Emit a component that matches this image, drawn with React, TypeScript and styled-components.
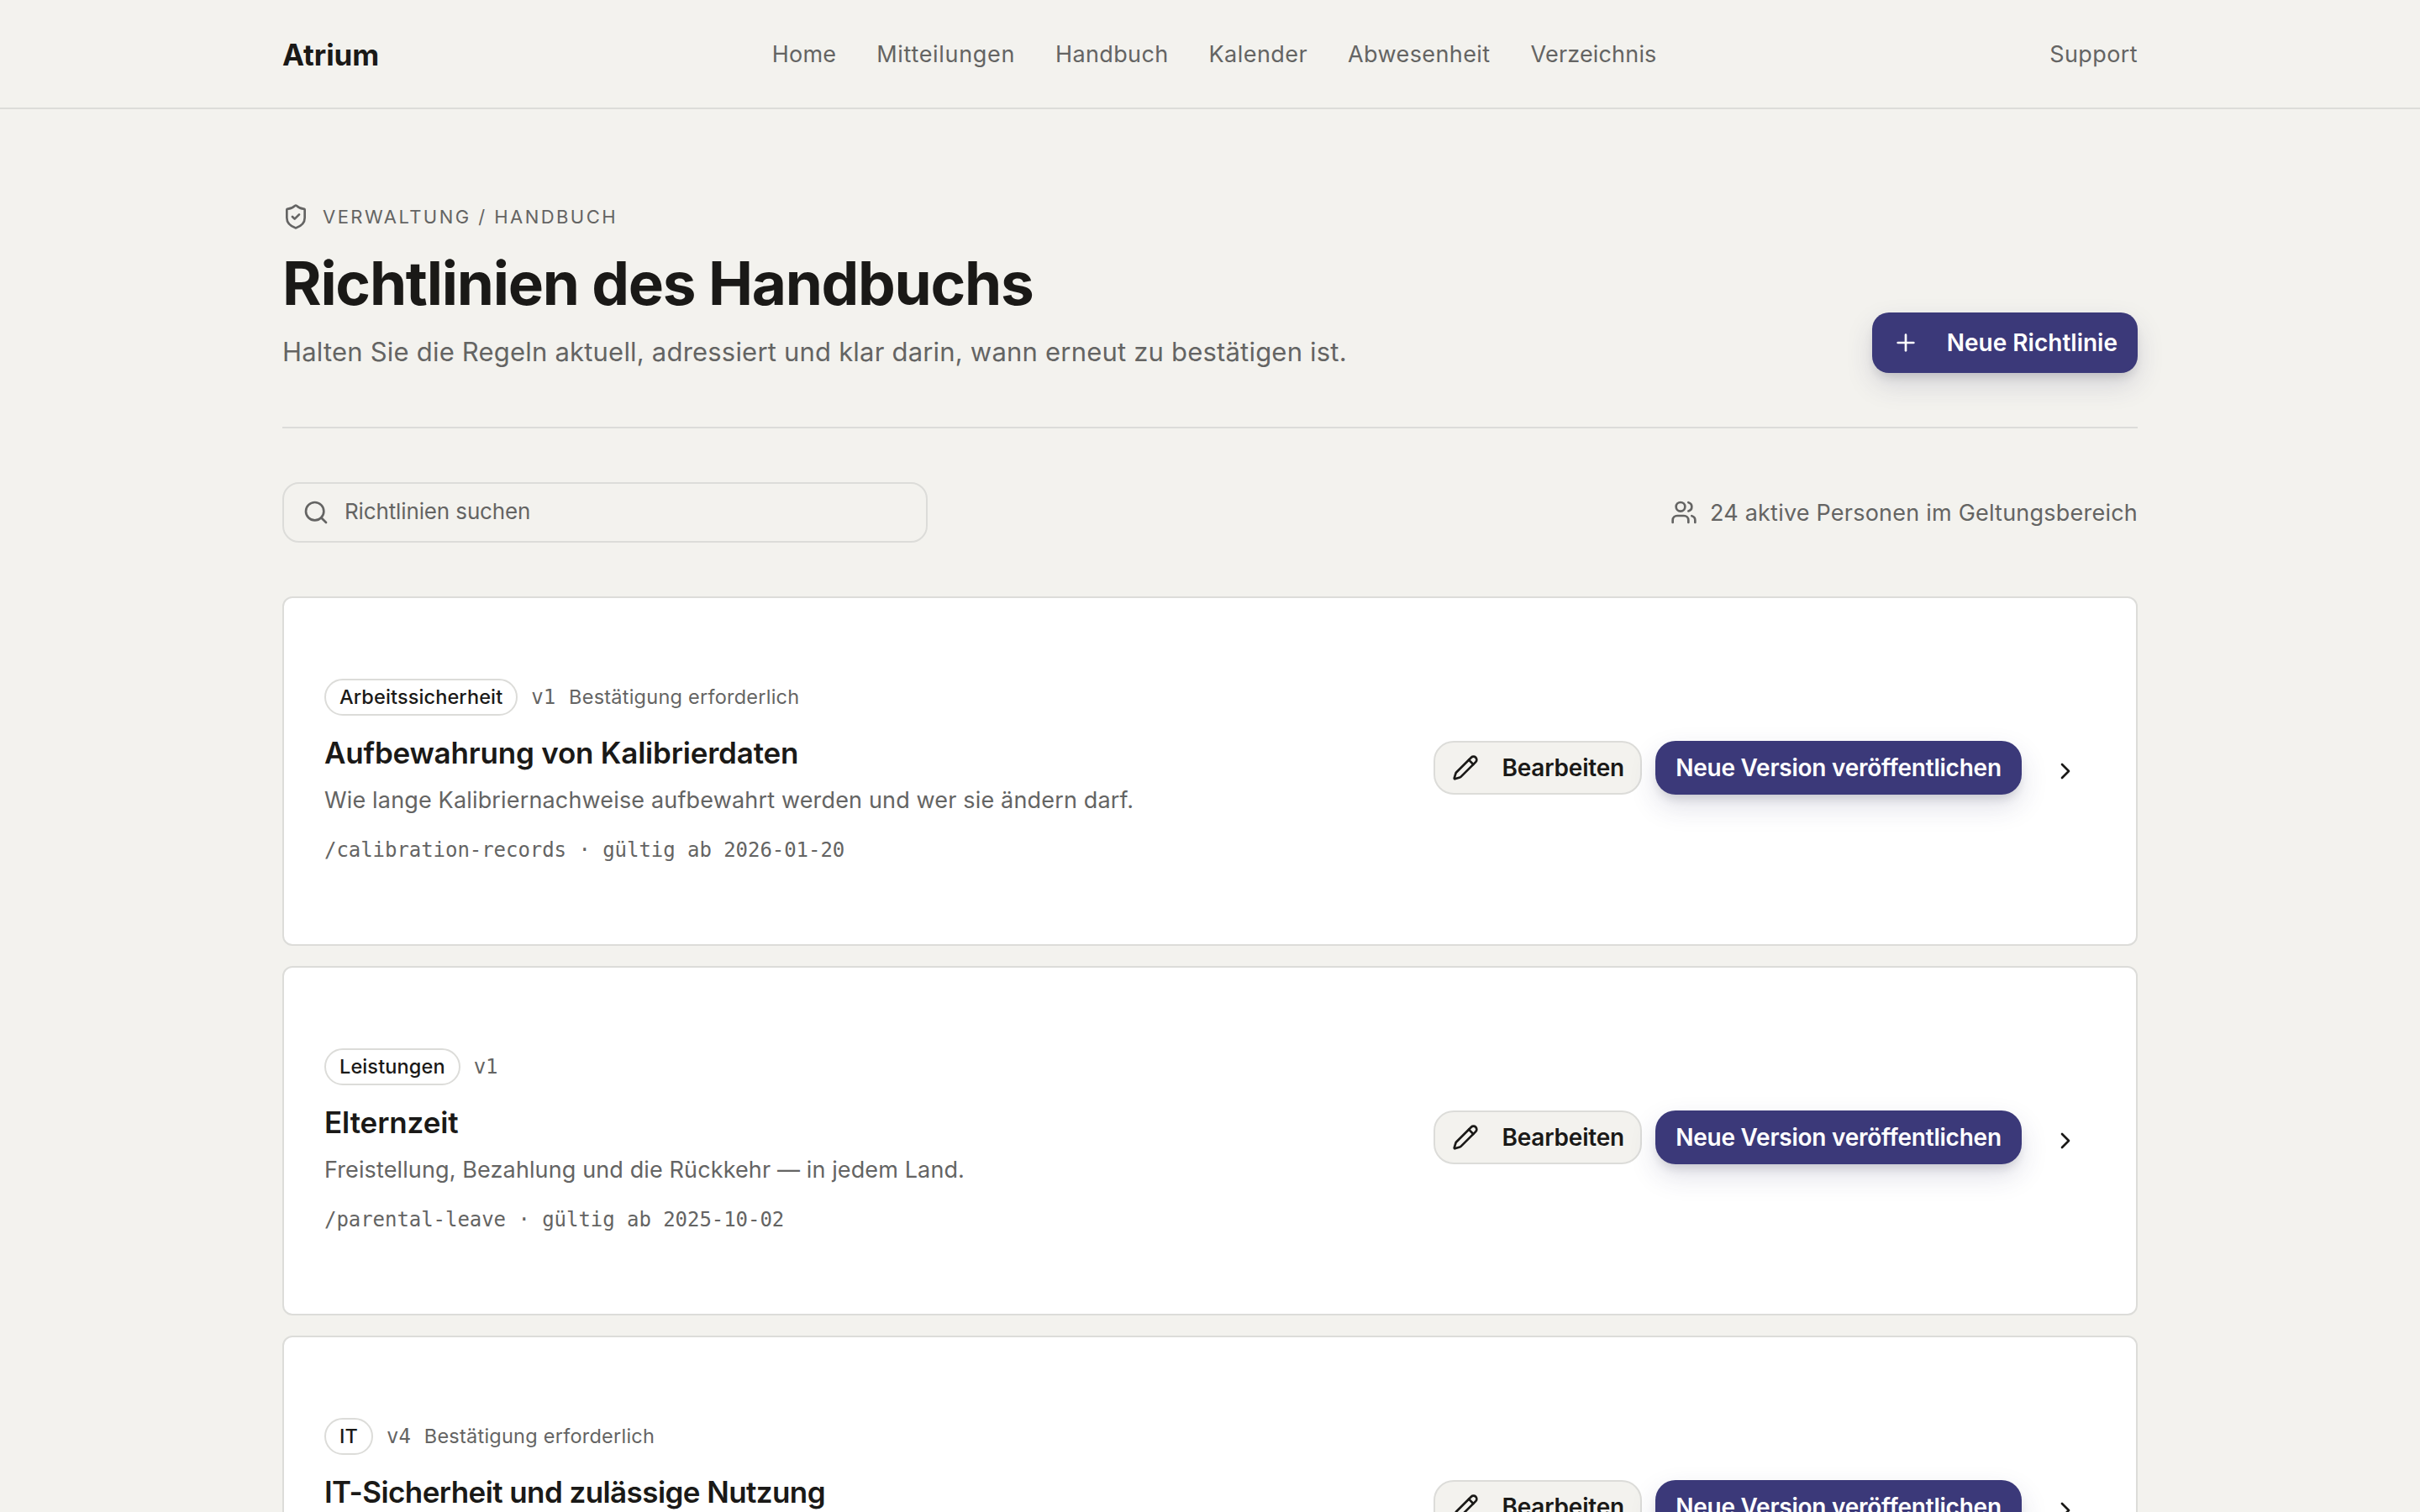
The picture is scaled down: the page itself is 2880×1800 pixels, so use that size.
import React from "react";
import styled, { createGlobalStyle, css } from "styled-components";
import { ChevronRight, Pencil, Plus, Search, ShieldCheck, Users } from "lucide-react";

const color = {
  canvas: "#f3f2ee",
  surface: "#ffffff",
  line: "#dcdcd9",
  ink: "#1a1917",
  muted: "#646463",
  accent: "#3b3979",
};

const sans = `"Inter", "Liberation Sans", sans-serif`;
const mono = `"DejaVu Sans Mono", "Liberation Mono", monospace`;

const GlobalStyle = createGlobalStyle`
  *, *::before, *::after { box-sizing: border-box; }
  html, body { margin: 0; background: ${color.canvas}; }
  body {
    height: 1800px;
    overflow: hidden;
    color: ${color.ink};
    font-family: ${sans};
    font-size: 27px;
    line-height: 44px;
  }
  h1, h2, p { margin: 0; }
  svg { display: block; flex: none; }
`;

const TopBar = styled.header`
  border-bottom: 2px solid ${color.line};
`;

const TopBarInner = styled.div`
  width: 2208px;
  height: 128px;
  margin: 0 auto;
  display: flex;
  align-items: center;
  justify-content: space-between;
`;

const Brand = styled.a`
  padding-top: 1px;
  font-size: 35px;
  font-weight: 700;
  letter-spacing: -0.1px;
`;

const Nav = styled.nav`
  display: flex;
  gap: 48px;
`;

const NavLink = styled.a<{ $tracking?: number }>`
  padding-top: 2px;
  color: ${color.muted};
  letter-spacing: ${(p) => p.$tracking ?? 0.4}px;
`;

const Page = styled.main`
  width: 2208px;
  margin: 0 auto;
  padding-top: 112px;
`;

const PageHeader = styled.section`
  display: flex;
  align-items: flex-end;
  justify-content: space-between;
  padding-bottom: 64px;
  border-bottom: 2px solid ${color.line};
`;

const Eyebrow = styled.div`
  display: flex;
  align-items: center;
  gap: 16px;
  color: ${color.muted};
  font-size: 22px;
  line-height: 32px;
  letter-spacing: 2.45px;
  text-transform: uppercase;
`;

const PageTitle = styled.h1`
  margin-top: 27px;
  font-size: 71px;
  font-weight: 700;
  line-height: 72px;
  letter-spacing: -1.25px;
`;

const Lead = styled.p`
  margin-top: 21px;
  color: ${color.muted};
  font-size: 31px;
  line-height: 50px;
  letter-spacing: 0.2px;
`;

const Button = styled.button<{ $primary?: boolean; $large?: boolean }>`
  display: flex;
  align-items: center;
  height: ${(p) => (p.$large ? 72 : 64)}px;
  border-radius: ${(p) => (p.$large ? 20 : 24)}px;
  font: 600 28px/40px ${sans};
  letter-spacing: -0.2px;
  white-space: nowrap;
  ${(p) =>
    p.$primary
      ? css`
          padding: 0 24px;
          border: 0;
          color: #ffffff;
          background: ${color.accent};
          box-shadow: 0 8px 12px -4px rgba(26, 25, 35, 0.15), 0 14px 32px rgba(50, 48, 100, 0.15);
        `
      : css`
          padding: 0 19px 0 20px;
          border: 2px solid ${color.line};
          color: ${color.ink};
          background: ${color.canvas};
        `}
`;

const CreateButton = styled(Button)`
  width: 316px;
  justify-content: space-between;
  letter-spacing: 0;
`;

const EditButton = styled(Button)`
  width: 248px;
  justify-content: space-between;
`;

const PublishButton = styled(Button)`
  width: 436px;
  justify-content: center;
  letter-spacing: -0.24px;
`;

const Toolbar = styled.section`
  display: flex;
  align-items: center;
  justify-content: space-between;
  margin-top: 64px;
`;

const SearchField = styled.label`
  display: flex;
  align-items: center;
  gap: 18px;
  width: 768px;
  height: 72px;
  padding: 0 22px;
  border: 2px solid ${color.line};
  border-radius: 20px;
  color: ${color.muted};
`;

const SearchInput = styled.input`
  flex: 1;
  padding: 0 0 2px;
  border: 0;
  outline: 0;
  background: transparent;
  font: 400 26px/40px ${sans};
  letter-spacing: -0.13px;
  &::placeholder {
    color: ${color.muted};
    opacity: 1;
  }
`;

const Audience = styled.div`
  display: flex;
  align-items: center;
  gap: 15px;
  color: ${color.muted};
  letter-spacing: 0.22px;
`;

const AudienceLabel = styled.span`
  padding-top: 2px;
`;

const PolicyList = styled.section`
  display: grid;
  gap: 24px;
  margin-top: 64px;
`;

const PolicyCard = styled.article`
  display: flex;
  align-items: center;
  justify-content: space-between;
  height: 416px;
  padding: 0 48px;
  border: 2px solid ${color.line};
  border-radius: 12px;
  background: ${color.surface};
`;

const PolicyBody = styled.div`
  height: 220px;
`;

const MetaRow = styled.div`
  display: flex;
  align-items: center;
  gap: 16px;
  height: 44px;
  color: ${color.muted};
  font-size: 23.5px;
  letter-spacing: 0.24px;
`;

const Badge = styled.span`
  display: flex;
  align-items: center;
  height: 44px;
  padding: 0 16px;
  border: 2px solid ${color.line};
  border-radius: 22px;
  color: ${color.ink};
  font-weight: 500;
  letter-spacing: 0.12px;
`;

const Version = styled.span`
  font-family: ${mono};
  font-size: 24px;
  letter-spacing: -0.05px;
`;

const PolicyTitle = styled.h2<{ $tracking: number }>`
  margin-top: 22px;
  font-size: 35px;
  font-weight: 600;
  line-height: 44px;
  letter-spacing: ${(p) => p.$tracking}px;
`;

const Summary = styled.p<{ $tracking: number }>`
  margin-top: 13px;
  color: ${color.muted};
  letter-spacing: ${(p) => p.$tracking}px;
`;

const Path = styled.p`
  margin-top: 21px;
  color: ${color.muted};
  font-family: ${mono};
  font-size: 24px;
  line-height: 32px;
  letter-spacing: -0.05px;
`;

const Actions = styled.div`
  display: flex;
  align-items: flex-start;
  gap: 16px;
`;

const OpenButton = styled.button`
  display: grid;
  place-items: center;
  width: 72px;
  height: 72px;
  padding: 0;
  border: 0;
  color: ${color.ink};
  background: transparent;
`;

const navItems = [
  { label: "Home", tracking: 0.2 },
  { label: "Mitteilungen", tracking: 0.68 },
  { label: "Handbuch", tracking: 0.35 },
  { label: "Kalender", tracking: 0.45 },
  { label: "Abwesenheit", tracking: 0.4 },
  { label: "Verzeichnis", tracking: 0.17 },
];

interface Policy {
  category: string;
  version: number;
  required: boolean;
  title: string;
  titleTracking: number;
  summary: string;
  summaryTracking: number;
  slug: string;
  since: string;
}

const policies: Policy[] = [
  {
    category: "Arbeitssicherheit",
    version: 1,
    required: true,
    title: "Aufbewahrung von Kalibrierdaten",
    titleTracking: -0.2,
    summary: "Wie lange Kalibriernachweise aufbewahrt werden und wer sie ändern darf.",
    summaryTracking: 0.16,
    slug: "calibration-records",
    since: "2026-01-20",
  },
  {
    category: "Leistungen",
    version: 1,
    required: false,
    title: "Elternzeit",
    titleTracking: -0.1,
    summary: "Freistellung, Bezahlung und die Rückkehr — in jedem Land.",
    summaryTracking: 0.12,
    slug: "parental-leave",
    since: "2025-10-02",
  },
  {
    category: "IT",
    version: 4,
    required: true,
    title: "IT-Sicherheit und zulässige Nutzung",
    titleTracking: -0.58,
    summary: "",
    summaryTracking: 0.16,
    slug: "",
    since: "",
  },
];

function PolicyRow({ policy }: { policy: Policy }) {
  return (
    <PolicyCard>
      <PolicyBody>
        <MetaRow>
          <Badge>{policy.category}</Badge>
          <Version>v{policy.version}</Version>
          {policy.required && <span>Bestätigung erforderlich</span>}
        </MetaRow>
        <PolicyTitle $tracking={policy.titleTracking}>{policy.title}</PolicyTitle>
        {policy.summary && <Summary $tracking={policy.summaryTracking}>{policy.summary}</Summary>}
        {policy.slug && (
          <Path>
            /{policy.slug} · gültig ab {policy.since}
          </Path>
        )}
      </PolicyBody>
      <Actions>
        <EditButton>
          <Pencil size={32} />
          Bearbeiten
        </EditButton>
        <PublishButton $primary>Neue Version veröffentlichen</PublishButton>
        <OpenButton aria-label={policy.title}>
          <ChevronRight size={32} />
        </OpenButton>
      </Actions>
    </PolicyCard>
  );
}

export default function App() {
  return (
    <>
      <GlobalStyle />
      <TopBar>
        <TopBarInner>
          <Brand>Atrium</Brand>
          <Nav>
            {navItems.map((item) => (
              <NavLink key={item.label} $tracking={item.tracking}>
                {item.label}
              </NavLink>
            ))}
          </Nav>
          <NavLink>Support</NavLink>
        </TopBarInner>
      </TopBar>
      <Page>
        <PageHeader>
          <div>
            <Eyebrow>
              <ShieldCheck size={32} />
              Verwaltung / Handbuch
            </Eyebrow>
            <PageTitle>Richtlinien des Handbuchs</PageTitle>
            <Lead>Halten Sie die Regeln aktuell, adressiert und klar darin, wann erneut zu bestätigen ist.</Lead>
          </div>
          <CreateButton $primary $large>
            <Plus size={32} />
            Neue Richtlinie
          </CreateButton>
        </PageHeader>
        <Toolbar>
          <SearchField>
            <Search size={32} />
            <SearchInput placeholder="Richtlinien suchen" />
          </SearchField>
          <Audience>
            <Users size={32} />
            <AudienceLabel>24 aktive Personen im Geltungsbereich</AudienceLabel>
          </Audience>
        </Toolbar>
        <PolicyList>
          {policies.map((policy) => (
            <PolicyRow key={policy.title} policy={policy} />
          ))}
        </PolicyList>
      </Page>
    </>
  );
}
